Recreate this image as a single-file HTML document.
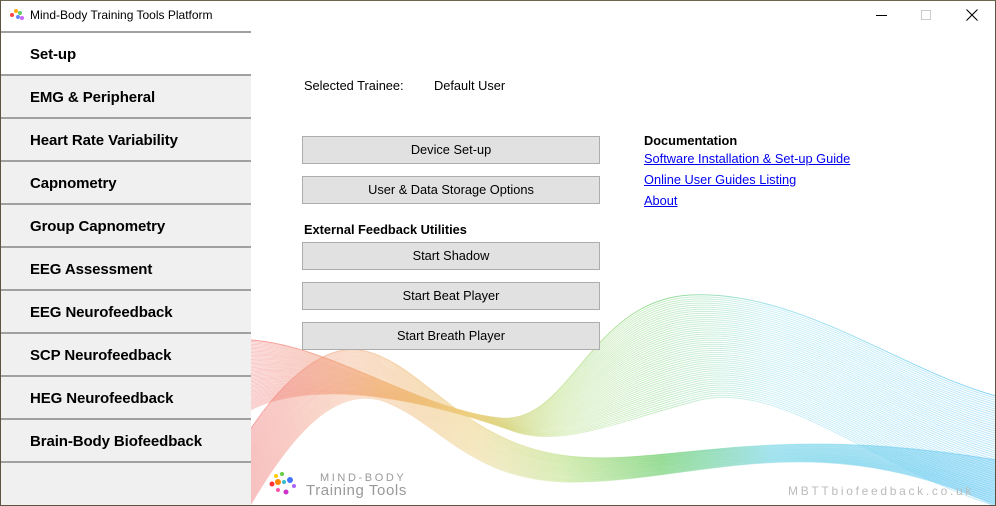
<!DOCTYPE html>
<html><head><meta charset="utf-8"><style>
*{margin:0;padding:0;box-sizing:border-box}
body{width:996px;height:506px;overflow:hidden;background:#fff;font-family:"Liberation Sans",sans-serif;position:relative;color:#000}
.win{position:absolute;left:0;top:0;width:996px;height:506px;border:1px solid #5a5440;border-top-color:#6b6650}
.title{position:absolute;left:30px;top:8px;font-size:12px}
.side{position:absolute;left:1px;top:31px;width:250px;height:474px;background:#f0f0f0}
.item{position:absolute;left:0;width:250px;height:43px;border-top:2px solid #a0a0a0;font-weight:bold;font-size:15px;padding:13px 0 0 29px;letter-spacing:-0.1px}
.item.sel{background:#fff}
.btn{position:absolute;left:302px;width:298px;height:28px;background:#e1e1e1;border:1px solid #adadad;font-size:12.8px;text-align:center;line-height:26px}
.t{position:absolute;font-size:12.8px}
a{color:#0000ee;text-decoration:underline}
</style></head><body>
<svg style="position:absolute;left:0;top:0" width="996" height="506">
<defs>
<linearGradient id="g" gradientUnits="userSpaceOnUse" x1="250" y1="0" x2="996" y2="0">
<stop offset="0" stop-color="#ee6a6a"/><stop offset="0.18" stop-color="#f0b070"/><stop offset="0.3" stop-color="#ecd080"/><stop offset="0.42" stop-color="#b8df80"/><stop offset="0.55" stop-color="#66cc66"/><stop offset="0.7" stop-color="#7fd8e8"/><stop offset="1" stop-color="#50c0f0"/>
</linearGradient></defs>
<g id="lines" fill="none" stroke="url(#g)" stroke-width="1"></g>
</svg>
<script>
(function(){
var g=document.getElementById('lines');var s='';
function lerp(a,b,t){return a.map(function(v,i){return v+(b[i]-v)*t;});}
function P(p){return 'M'+p[0]+','+p[1]+' C'+p[2]+','+p[3]+' '+p[4]+','+p[5]+' '+p[6]+','+p[7]+' C'+p[8]+','+p[9]+' '+p[10]+','+p[11]+' '+p[12]+','+p[13]+' C'+p[14]+','+p[15]+' '+p[16]+','+p[17]+' '+p[18]+','+p[19];}
var A1=[250,340, 330,345,420,410,500,418, 570,425,590,300,690,295, 800,290,900,370,996,396];
var A2=[250,410, 310,380,410,395,510,430, 560,450,620,420,700,400, 780,380,880,470,996,506];
var B1=[250,430, 290,370,330,345,360,350, 420,360,460,440,560,455, 660,470,760,420,996,460];
var B2=[250,506, 300,420,340,390,380,400, 440,420,470,485,580,482, 700,480,820,425,996,506];
var N=50;
for(var i=0;i<=N;i++){var t=i/N;
s+='<path d="'+P(lerp(A1,A2,t))+'" stroke-opacity="'+(i==0?0.7:0.38)+'"/>';
s+='<path d="'+P(lerp(B1,B2,t))+'" stroke-opacity="'+(i==0?0.6:0.36)+'"/>';}
g.innerHTML=s;})();
</script>
<div class="win"></div>
<svg style="position:absolute;left:8px;top:7px" width="18" height="16"><circle cx="4" cy="8" r="2" fill="#f44"/><circle cx="8" cy="4" r="2" fill="#fa0"/><circle cx="12" cy="6" r="2" fill="#6c6"/><circle cx="10" cy="10" r="2" fill="#68f"/><circle cx="14" cy="11" r="2" fill="#c6f"/></svg>
<div class="title">Mind-Body Training Tools Platform</div>
<div style="position:absolute;left:876px;top:15px;width:11px;height:1px;background:#000"></div>
<div style="position:absolute;left:921px;top:10px;width:10px;height:10px;border:1px solid #ccc"></div>
<svg style="position:absolute;left:966px;top:9px" width="12" height="12"><path d="M0.5,0.5L11.5,11.5M11.5,0.5L0.5,11.5" stroke="#000" stroke-width="1.1"/></svg>
<div class="side">
<div class="item sel" style="top:0">Set-up</div>
<div class="item" style="top:43px">EMG &amp; Peripheral</div>
<div class="item" style="top:86px">Heart Rate Variability</div>
<div class="item" style="top:129px">Capnometry</div>
<div class="item" style="top:172px">Group Capnometry</div>
<div class="item" style="top:215px">EEG Assessment</div>
<div class="item" style="top:258px">EEG Neurofeedback</div>
<div class="item" style="top:301px">SCP Neurofeedback</div>
<div class="item" style="top:344px">HEG Neurofeedback</div>
<div class="item" style="top:387px">Brain-Body Biofeedback</div>
<div class="item" style="top:430px;height:44px"></div>
</div>
<div class="t" style="left:304px;top:78px">Selected Trainee:</div>
<div class="t" style="left:434px;top:78px">Default User</div>
<div class="btn" style="top:136px">Device Set-up</div>
<div class="btn" style="top:176px">User &amp; Data Storage Options</div>
<div class="t" style="left:304px;top:222px;font-weight:bold">External Feedback Utilities</div>
<div class="btn" style="top:242px">Start Shadow</div>
<div class="btn" style="top:282px">Start Beat Player</div>
<div class="btn" style="top:322px">Start Breath Player</div>
<div class="t" style="left:644px;top:133px;font-weight:bold">Documentation</div>
<div class="t" style="left:644px;top:151px"><a>Software Installation &amp; Set-up Guide</a></div>
<div class="t" style="left:644px;top:172px"><a>Online User Guides Listing</a></div>
<div class="t" style="left:644px;top:193px"><a>About</a></div>
<svg style="position:absolute;left:266px;top:470px" width="36" height="32"><circle cx="6" cy="14" r="2.5" fill="#f33"/><circle cx="12" cy="12" r="3" fill="#f80"/><circle cx="10" cy="6" r="2" fill="#fc0"/><circle cx="16" cy="4" r="2" fill="#6c4"/><circle cx="18" cy="12" r="2" fill="#3bc"/><circle cx="24" cy="10" r="3" fill="#47f"/><circle cx="28" cy="16" r="2" fill="#a6f"/><circle cx="20" cy="22" r="2.5" fill="#c3c"/><circle cx="12" cy="20" r="2" fill="#f5a"/></svg>
<div style="position:absolute;left:320px;top:472px;font-size:11px;letter-spacing:2.6px;color:#999">MIND-BODY</div>
<div style="position:absolute;left:306px;top:482px;font-size:15px;letter-spacing:0.6px;color:#999">Training Tools</div>
<div style="position:absolute;left:788px;top:484px;font-size:12px;letter-spacing:2.7px;color:#bbb">MBTTbiofeedback.co.uk</div>
</body></html>
